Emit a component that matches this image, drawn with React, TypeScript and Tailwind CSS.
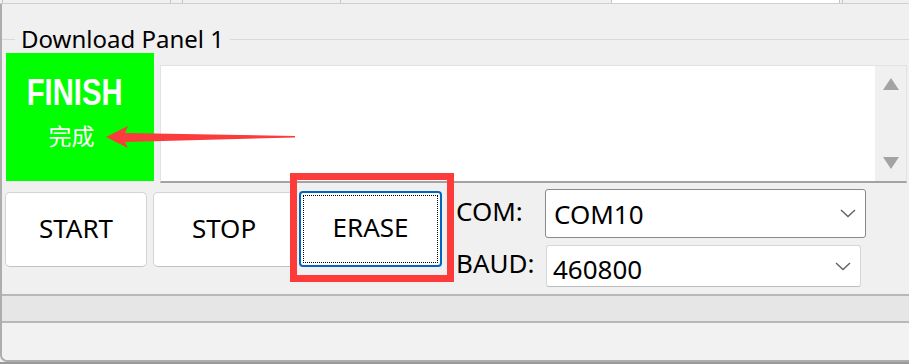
import React from 'react';

function Chevron(): JSX.Element {
  return (
    <svg width="16" height="9" viewBox="0 0 16 9" className="shrink-0">
      <polyline points="1,1 8,7.5 15,1" fill="none" stroke="#616161" strokeWidth="1.4" />
    </svg>
  );
}

function Combo({ value, active }: { value: string; active?: boolean }): JSX.Element {
  return (
    <div
      className={
        active
          ? 'flex items-center justify-between w-[321px] h-[49px] bg-white border border-[#8a8a8a] rounded-[3px] pl-[8px] pr-[9px]'
          : 'flex items-center justify-between w-[315px] h-[42px] bg-white border border-[#d6d6d6] border-b-[#bdbdbd] rounded-[3px] pl-[6px] pr-[9px]'
      }
    >
      <span className={active ? 'text-[26px] leading-[30px]' : 'text-[26px] leading-[30px] translate-y-[2.5px]'}>
        {value}
      </span>
      <Chevron />
    </div>
  );
}

function Btn({ label, focused }: { label: string; focused?: boolean }): JSX.Element {
  if (focused) {
    return (
      <div className="w-[143px] h-[76px] -mt-[1px] bg-white border-2 border-[#0067c0] rounded-[4px] p-[2px]">
        <div className="w-full h-full border border-dotted border-black flex items-center justify-center">
          <span className="text-[26px] leading-[30px] -translate-y-[2.5px]">{label}</span>
        </div>
      </div>
    );
  }
  return (
    <div className="w-[142px] h-[75px] bg-white border border-[#d3d3d3] border-b-[#c2c2c2] rounded-[5px] flex items-center justify-center">
      <span className="text-[26px] leading-[30px] -translate-y-[2px]">{label}</span>
    </div>
  );
}

export default function App(): JSX.Element {
  return (
    <div className="relative w-[909px] h-[364px] bg-[#f0f0f0] overflow-hidden flex flex-col text-black font-['Noto_Sans',sans-serif]">
      {/* top strip */}
      <div className="flex h-[4px] border-b border-[#d0d0d0]">
        <div className="w-[3px] border-r border-[#c4c4c4]" />
        <div className="w-[168px] border-r border-[#c4c4c4]" />
        <div className="w-[12px] border-r border-[#c4c4c4]" />
        <div className="w-[158px] border-r border-[#c4c4c4]" />
        <div className="w-[271px] border-r border-[#c4c4c4]" />
        <div className="w-[228px] bg-white border-r border-[#c4c4c4]" />
        <div className="w-[3px] border-r border-[#c4c4c4]" />
        <div className="flex-1" />
      </div>

      {/* window frame */}
      <div className="h-[358px] border-l-2 border-b-2 border-[#adadad] rounded-bl-[7px] flex flex-col">
        <fieldset className="mt-[21px] border-t border-[#d9d9d9]">
          <legend className="ml-[13px] px-[6px] text-[24px] leading-[28px]">Download Panel 1</legend>

          <div className="flex items-start">
            <div className="ml-[4px] w-[148px] h-[128px] bg-[#00ff00] flex flex-col items-center pr-[11px] text-white">
              <span className="mt-[19px] inline-block scale-x-[0.79] font-['Liberation_Sans',sans-serif] font-bold text-[37px] leading-[42px]">
                FINISH
              </span>
              <span className="mt-[8px] mr-[6px] font-['Noto_Sans_CJK_SC',sans-serif] text-[23px] leading-[26px]">完成</span>
            </div>

            <div className="ml-[6px] mt-[12px] w-[747px] h-[118px] bg-white border border-[#e2e2e2] border-b-2 border-b-[#a3a3a3] flex justify-end">
              <div className="w-[31px] h-full bg-[#f0f0f0] flex flex-col items-center justify-between py-[12px]">
                <svg width="16" height="12" viewBox="0 0 16 12">
                  <polygon points="8,0 16,12 0,12" fill="#a3a3a3" />
                </svg>
                <svg width="16" height="12" viewBox="0 0 16 12">
                  <polygon points="0,0 16,0 8,12" fill="#a3a3a3" />
                </svg>
              </div>
            </div>
          </div>

          <div className="flex items-start mt-[9px]">
            <div className="ml-[3px]">
              <Btn label="START" />
            </div>
            <div className="ml-[6px]">
              <Btn label="STOP" />
            </div>
            <div className="ml-[4px]">
              <Btn label="ERASE" focused />
            </div>

            <div className="ml-[14px] -mt-[3px] flex flex-col">
              <div className="flex items-center h-[49px]">
                <span className="w-[89px] text-[26px] leading-[30px] -translate-y-[3px]">COM:</span>
                <Combo value="COM10" active />
              </div>
              <div className="flex items-center h-[42px] mt-[7px]">
                <span className="w-[90px] text-[26px] leading-[30px] -translate-y-[3.5px]">BAUD:</span>
                <Combo value="460800" />
              </div>
            </div>
          </div>
        </fieldset>

        {/* status bar */}
        <div className="mt-[7px] h-[29px] bg-[#e6e6e6] border-y-2 border-[#b8b8b8]" />
        <div className="flex-1 bg-[#f2f2f2] rounded-bl-[6px]" />
      </div>
      <div className="h-[2px] bg-[#9a9a9a]" />

      {/* red annotations */}
      <svg className="absolute left-0 top-0 pointer-events-none" width="909" height="364" viewBox="0 0 909 364">
        <polygon
          points="106,137 128,126 125,133 295,136 295,137.5 125,142 128,148"
          fill="#fa3c3c"
        />
        <rect x="293.5" y="176.5" width="157" height="102" fill="none" stroke="#fd3b3b" strokeWidth="7" />
      </svg>
    </div>
  );
}
